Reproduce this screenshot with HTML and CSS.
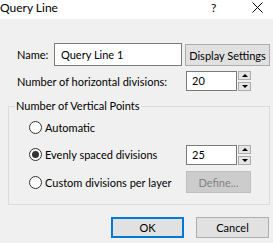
FILE: index.html
```html
<!DOCTYPE html>
<html lang="en">
<head>
  <meta charset="UTF-8" />
  <title>Query Line</title>
  <link rel="stylesheet" href="styles.css">
</head>
<body>

  <div class="titlebar">
    <span class="title">Query Line</span>
    <span class="help">?</span>
    <span class="close">
      <svg width="11" height="11" viewBox="0 0 11 11">
        <path d="M0.5 0.5 L10.5 10.5 M10.5 0.5 L0.5 10.5" stroke="#000" stroke-width="1" fill="none"/>
      </svg>
    </span>
  </div>

  <div class="content">
    <div class="row row-name">
      <span class="lbl-name">Name:</span>
      <div class="textbox name-box">Query Line 1</div>
      <button class="btn btn-display">Display Settings</button>
    </div>

    <div class="row row-horiz">
      <span class="lbl-horiz">Number of horizontal divisions:</span>
      <div class="spin">
        <div class="spin-value">20</div>
        <div class="spin-btns">
          <span class="spin-btn"><i class="arrow-up"></i></span>
          <span class="spin-btn"><i class="arrow-down"></i></span>
        </div>
      </div>
    </div>

    <fieldset class="group">
      <legend>Number of Vertical Points</legend>
      <div class="opt">
        <span class="radio"></span>
        <span class="opt-text">Automatic</span>
      </div>
      <div class="opt">
        <span class="radio checked"></span>
        <span class="opt-text">Evenly spaced divisions</span>
        <div class="spin spin-vert">
          <div class="spin-value">25</div>
          <div class="spin-btns">
            <span class="spin-btn"><i class="arrow-up"></i></span>
            <span class="spin-btn"><i class="arrow-down"></i></span>
          </div>
        </div>
      </div>
      <div class="opt opt-last">
        <span class="radio"></span>
        <span class="opt-text">Custom divisions per layer</span>
        <button class="btn btn-define" disabled>Define...</button>
      </div>
    </fieldset>

    <div class="footer">
      <button class="btn btn-ok">OK</button>
      <button class="btn btn-cancel">Cancel</button>
    </div>
  </div>

</body>
</html>
```

FILE: styles.css
```css
body {
  margin: 0;
  width: 273px;
  height: 243px;
  overflow: hidden;
  background-color: #f0f0f0;
  color: #000;
  font-family: Lato, "Liberation Sans", sans-serif;
  font-size: 11px;
}

.titlebar {
  height: 19px;
  background-color: #fff;
  display: flex;
  align-items: center;
  font-size: 12px;
  line-height: 14px;
}

.title {
  flex: 1;
  margin-top: -3px;
}

.help {
  width: 41px;
  margin-top: -3px;
}

.close {
  width: 21px;
  height: 11px;
  margin-top: -4px;
}

.close svg {
  display: block;
}

.content {
  padding: 0 3px 0 8px;
}

.row {
  display: flex;
  align-items: center;
}

.row-name {
  margin-top: 24px;
  height: 23px;
}

.lbl-name {
  margin-left: 9px;
  width: 37px;
}

.textbox {
  box-sizing: border-box;
  background-color: #fff;
  border: 1px solid #7a7a7a;
  padding-left: 5px;
  line-height: 19px;
}

.name-box {
  width: 128px;
  height: 23px;
  line-height: 21px;
  padding-left: 6px;
}

.btn {
  box-sizing: border-box;
  margin: 0;
  padding: 0;
  background-color: #e1e1e1;
  border: 1px solid #adadad;
  font-family: inherit;
  font-size: 11px;
  color: #000;
  white-space: nowrap;
}

.btn-display {
  margin-left: 3px;
  width: 85px;
  height: 22px;
  margin-top: 1px;
}

.row-horiz {
  margin-top: 5px;
  height: 20px;
}

.lbl-horiz {
  margin-left: 9px;
  width: 169px;
}

.spin {
  display: flex;
  height: 20px;
  width: 65px;
}

.spin-value {
  box-sizing: border-box;
  width: 51px;
  height: 20px;
  background-color: #fff;
  border: 1px solid #7a7a7a;
  padding-left: 5px;
  line-height: 18px;
}

.spin-btns {
  display: flex;
  flex-direction: column;
  justify-content: space-between;
  margin-left: 1px;
  width: 13px;
}

.spin-btn {
  box-sizing: border-box;
  height: 9px;
  background-color: #e5e5e5;
  border: 1px solid #adadad;
  display: flex;
  align-items: center;
  justify-content: center;
}

.arrow-up {
  width: 0;
  height: 0;
  border-left: 3px solid transparent;
  border-right: 3px solid transparent;
  border-bottom: 3px solid #000;
}

.arrow-down {
  width: 0;
  height: 0;
  border-left: 3px solid transparent;
  border-right: 3px solid transparent;
  border-top: 3px solid #000;
}

.group {
  margin: 8px 0 0 0;
  padding: 4px 18px 11px 6px;
  border: 1px solid #dcdcdc;
  min-width: 0;
}

.group legend {
  padding: 0 1px;
  line-height: 14px;
}

.opt {
  display: flex;
  align-items: center;
  height: 21px;
  margin-left: 14px;
}

.opt + .opt {
  margin-top: 6px;
}

.opt-last {
  height: 22px;
}

.radio {
  box-sizing: border-box;
  width: 13px;
  height: 13px;
  border: 1px solid #333;
  border-radius: 50%;
  background-color: #fff;
  margin-right: 3px;
  display: flex;
  align-items: center;
  justify-content: center;
}

.radio.checked::after {
  content: "";
  width: 7px;
  height: 7px;
  border-radius: 50%;
  background-color: #333;
}

.opt-text {
  flex: 1;
}

.btn-define {
  width: 65px;
  height: 22px;
  margin-left: 1px;
  background-color: #cccccc;
  border-color: #bfbfbf;
  color: #838383;
}

.footer {
  display: flex;
  justify-content: flex-end;
  gap: 12px;
  margin-top: 12px;
  padding-right: 1px;
}

.btn-ok, .btn-cancel {
  width: 73px;
  height: 21px;
}

.btn-ok {
  border: 2px solid #0078d7;
}
```
